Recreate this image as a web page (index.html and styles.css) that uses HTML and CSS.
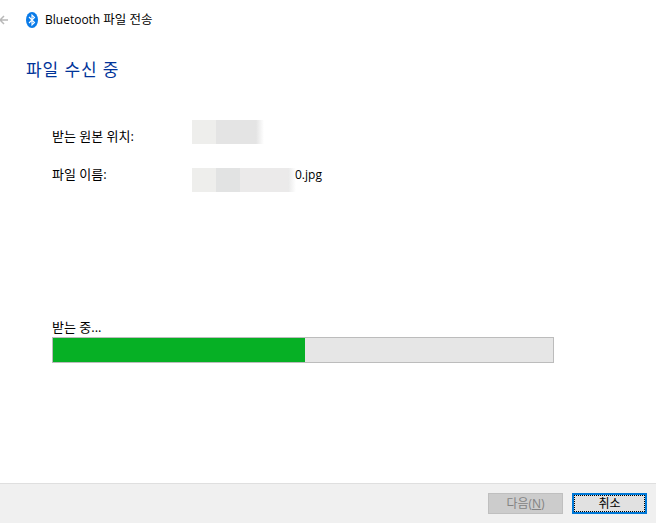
FILE: index.html
```html
<!DOCTYPE html>
<html lang="ko">
<head>
<meta charset="utf-8">
<title>Bluetooth 파일 전송</title>
<link rel="stylesheet" href="styles.css">
</head>
<body>
<div class="window">
  <header class="titlebar">
    <svg class="back" width="9" height="10" viewBox="0 0 9 10"><path d="M9 5H1M5 1L1 5L5 9" fill="none" stroke="#b8b8b8" stroke-width="1.500"/></svg>
    <svg class="bt" width="12" height="16" viewBox="0 0 12 16"><ellipse cx="6" cy="8" rx="6" ry="8" fill="#0a7be8"/><path d="M3 5L8.500 10.500L6 13V3L8.500 5.500L3 11" fill="none" stroke="#fff" stroke-width="1.100"/></svg>
    <span class="title">Bluetooth <span class="ko">파일 전송</span></span>
  </header>
  <main class="content">
    <h1 class="heading">파일 수신 중</h1>
    <div class="fields">
      <div class="label source-label">받는 원본 위치:</div>
      <div class="value"><div class="blur"><i class="s1 w24"></i><i class="s2 w40"></i><i class="s6"></i></div></div>
      <div class="label name-label">파일 이름:</div>
      <div class="value"><div class="blur"><i class="s1 w24"></i><i class="s3 w24"></i><i class="s4 w48"></i><i class="s5"></i></div><span class="fname">0.jpg</span></div>
    </div>
    <div class="status">받는 중...</div>
    <div class="progress"><div class="fill"></div></div>
  </main>
  <footer class="footer">
    <button class="btn disabled" disabled>다음(<u>N</u>)</button>
    <button class="btn primary"><span class="focus">취소</span></button>
  </footer>
</div>
</body>
</html>
```
FILE: styles.css
```css
* { box-sizing: border-box; }
html, body { margin: 0; height: 100%; }
body { background: #fff; font-family: "Open Sans", "Noto Sans CJK KR", sans-serif; font-size: 12px; color: #000; overflow: hidden; }
.window { height: 523px; display: flex; flex-direction: column; }
.titlebar { height: 40px; flex: none; display: flex; align-items: center; position: relative; padding-left: 26px; gap: 7px; }
.back { position: absolute; left: -1px; top: 15px; }
.bt { flex: none; }
.title { line-height: 16px; }
.ko { font-size: 12.5px; }
.content { flex: 1; padding: 19px 0 0 26px; }
.heading { margin: 0; font-size: 17px; font-weight: 400; color: #003399; line-height: 22px; letter-spacing: 0.9px; }
.fields { margin: 39px 0 0 26px; display: grid; grid-template-columns: 140px 1fr; grid-auto-rows: 24px; row-gap: 24px; }
.label { font-size: 13px; }
.source-label { line-height: 32px; }
.name-label { line-height: 12px; }
.value { display: flex; align-items: center; }
.blur { display: flex; height: 24px; }
.blur i { display: block; height: 100%; }
.w24 { width: 24px; }
.w40 { width: 40px; }
.w48 { width: 48px; }
.s1 { background: #eeeeec; }
.s2 { background: #e4e4e4; }
.s3 { background: #e2e3e3; }
.s4 { background: #ebeaea; }
.s5 { width: 8px; background: linear-gradient(90deg, #e9e9e9, #fff); }
.s6 { width: 8px; background: linear-gradient(90deg, #e4e4e4, #fff); }
.fname { line-height: 24px; position: relative; top: -5px; left: -1px; }
.status { margin: 126px 0 0 26px; font-size: 13px; line-height: 18px; }
.progress { margin: 1px 0 0 26px; width: 502px; height: 26px; background: #e6e6e6; border: 1px solid #bcbcbc; }
.fill { width: 252px; height: 100%; background: #06b025; }
.footer { height: 40px; flex: none; background: #f0f0f0; border-top: 1px solid #dfdfdf; display: flex; justify-content: flex-end; align-items: flex-start; padding: 9px 9px 0 0; gap: 9px; }
.btn { width: 75px; height: 21px; padding: 0; font: inherit; line-height: 15px; background: #e1e1e1; color: #000; border: 1px solid #adadad; }
.btn.disabled { background: #cccccc; color: #838383; border-color: #bfbfbf; }
.btn.primary { border: 2px solid #0078d7; padding: 0; display: flex; }
.focus { flex: 1; border: 1px dotted #000; line-height: 15px; }
```
